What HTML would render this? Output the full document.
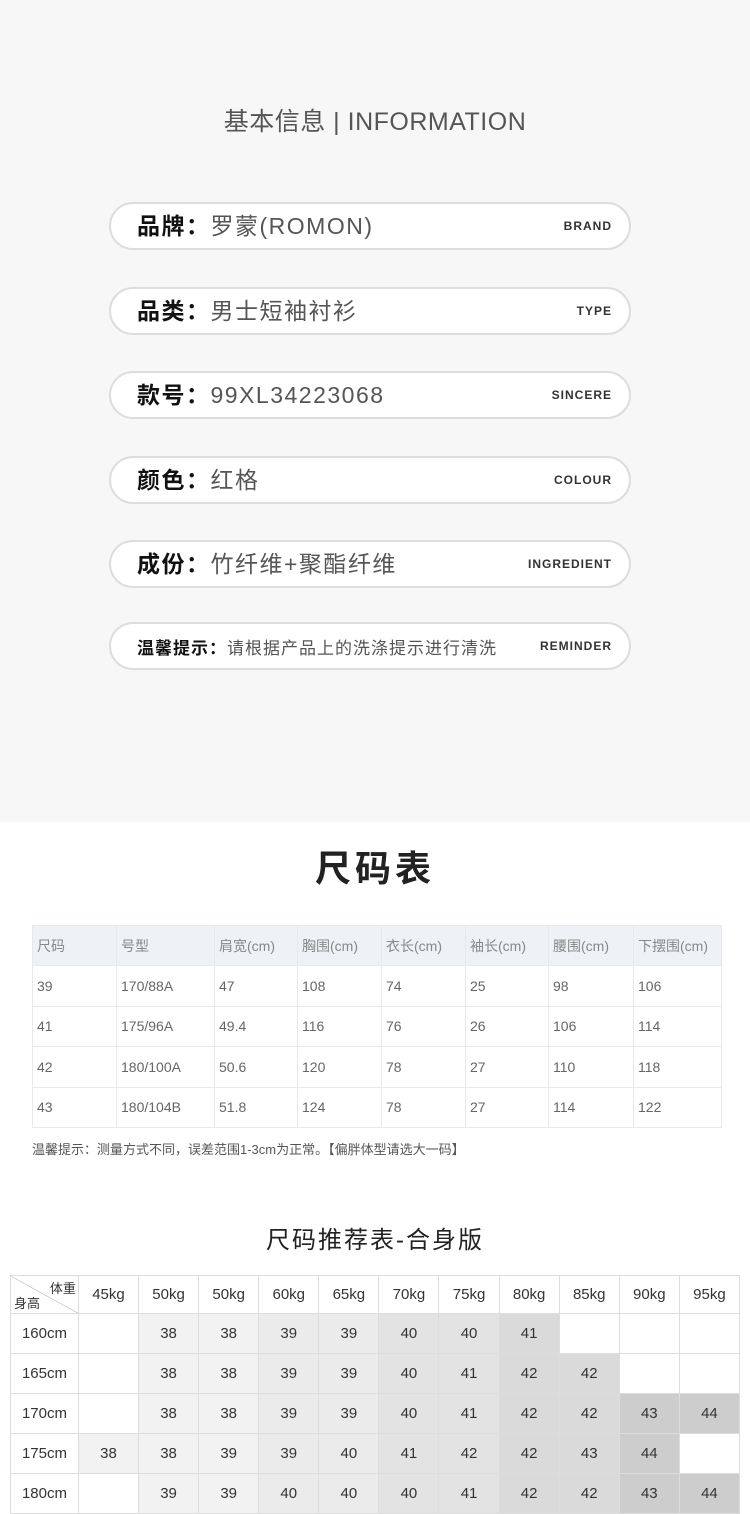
<!DOCTYPE html>
<html><head><meta charset="utf-8"><style>
*{margin:0;padding:0;box-sizing:border-box}
body{width:750px;height:1500px;overflow:hidden;background:#fff;font-family:"Liberation Sans","Noto Sans CJK SC",sans-serif;position:relative}
.top{position:absolute;left:0;top:0;width:750px;height:822px;background:#f7f7f7}
.h1{position:absolute;top:102px;left:0;width:750px;text-align:center;font-size:25px;color:#555;letter-spacing:0.5px}
.pill{position:absolute;left:109px;width:522px;height:48px;border:2px solid #ddd;border-radius:24px;background:#fff}
.pill .l{position:absolute;left:26px;top:3px;font-size:23px;color:#555;letter-spacing:1.5px;white-space:nowrap}
.pill .l b{color:#111;font-weight:bold}
.pill .r{position:absolute;right:17px;top:15px;font-size:12px;font-weight:bold;color:#333;letter-spacing:1px}
.t1{position:absolute;top:840px;left:0;width:750px;text-align:center;font-size:36px;font-weight:bold;color:#222;letter-spacing:4px}
table{border-collapse:collapse;position:absolute}
.a{left:32px;top:925px;width:690px;font-size:14px;color:#666}
.a td{border:1px solid #e6e9ee;height:40.4px;padding-left:4px}
.a tr:first-child td{background:#eef1f6;color:#888}
.note{position:absolute;left:32px;top:1139px;font-size:13px;color:#555}
.t2{position:absolute;top:1220px;left:0;width:750px;text-align:center;font-size:24px;color:#222;letter-spacing:2px}
.b{left:10px;top:1275px;width:730px;font-size:15px;color:#333;text-align:center}
.b td{border:1px solid #ddd;height:40px;width:60.2px}
.b tr:first-child td{height:38px}
.b td:first-child{width:68px}
.c1{background:#f2f2f2}.c2{background:#ebebeb}.c3{background:#e3e3e3}.c4{background:#dadada}.c5{background:#cdcdcd}
</style></head><body>
<div class="top"></div>
<div class="h1">基本信息 | INFORMATION</div>
<div class="pill" style="top:202px"><div class="l"><b>品牌：</b>罗蒙(ROMON)</div><div class="r">BRAND</div></div>
<div class="pill" style="top:287px"><div class="l"><b>品类：</b>男士短袖衬衫</div><div class="r">TYPE</div></div>
<div class="pill" style="top:371px"><div class="l"><b>款号：</b>99XL34223068</div><div class="r">SINCERE</div></div>
<div class="pill" style="top:456px"><div class="l"><b>颜色：</b>红格</div><div class="r">COLOUR</div></div>
<div class="pill" style="top:540px"><div class="l"><b>成份：</b>竹纤维+聚酯纤维</div><div class="r">INGREDIENT</div></div>
<div class="pill" style="top:622px"><div class="l" style="font-size:17px;top:10px;letter-spacing:1px"><b>温馨提示：</b>请根据产品上的洗涤提示进行清洗</div><div class="r">REMINDER</div></div>
<div class="t1">尺码表</div>
<table class="a">
<tr><td style="width:84px">尺码</td><td style="width:98px">号型</td><td style="width:83px">肩宽(cm)</td><td style="width:84px">胸围(cm)</td><td style="width:84px">衣长(cm)</td><td style="width:83px">袖长(cm)</td><td style="width:85px">腰围(cm)</td><td>下摆围(cm)</td></tr>
<tr><td>39</td><td>170/88A</td><td>47</td><td>108</td><td>74</td><td>25</td><td>98</td><td>106</td></tr>
<tr><td>41</td><td>175/96A</td><td>49.4</td><td>116</td><td>76</td><td>26</td><td>106</td><td>114</td></tr>
<tr><td>42</td><td>180/100A</td><td>50.6</td><td>120</td><td>78</td><td>27</td><td>110</td><td>118</td></tr>
<tr><td>43</td><td>180/104B</td><td>51.8</td><td>124</td><td>78</td><td>27</td><td>114</td><td>122</td></tr>
</table>
<div class="note">温馨提示：测量方式不同，误差范围1-3cm为正常。【偏胖体型请选大一码】</div>
<div class="t2">尺码推荐表-合身版</div>
<table class="b">
<tr><td style="position:relative;font-size:13px;background:linear-gradient(to bottom left,#fff calc(50% - 0.5px),#aaa 50%,#fff calc(50% + 0.5px))"><span style="position:absolute;right:2px;top:2px">体重</span><span style="position:absolute;left:3px;bottom:1px">身高</span></td><td>45kg</td><td>50kg</td><td>50kg</td><td>60kg</td><td>65kg</td><td>70kg</td><td>75kg</td><td>80kg</td><td>85kg</td><td>90kg</td><td>95kg</td></tr>
<tr><td>160cm</td><td></td><td class="c1">38</td><td class="c1">38</td><td class="c2">39</td><td class="c2">39</td><td class="c3">40</td><td class="c3">40</td><td class="c4">41</td><td></td><td></td><td></td></tr>
<tr><td>165cm</td><td></td><td class="c1">38</td><td class="c1">38</td><td class="c2">39</td><td class="c2">39</td><td class="c3">40</td><td class="c3">41</td><td class="c4">42</td><td class="c4">42</td><td></td><td></td></tr>
<tr><td>170cm</td><td></td><td class="c1">38</td><td class="c1">38</td><td class="c2">39</td><td class="c2">39</td><td class="c3">40</td><td class="c3">41</td><td class="c4">42</td><td class="c4">42</td><td class="c5">43</td><td class="c5">44</td></tr>
<tr><td>175cm</td><td class="c1">38</td><td class="c1">38</td><td class="c1">39</td><td class="c2">39</td><td class="c2">40</td><td class="c3">41</td><td class="c3">42</td><td class="c4">42</td><td class="c4">43</td><td class="c5">44</td><td></td></tr>
<tr><td>180cm</td><td></td><td class="c1">39</td><td class="c1">39</td><td class="c2">40</td><td class="c2">40</td><td class="c3">40</td><td class="c3">41</td><td class="c4">42</td><td class="c4">42</td><td class="c5">43</td><td class="c5">44</td></tr>
</table>
</body></html>
